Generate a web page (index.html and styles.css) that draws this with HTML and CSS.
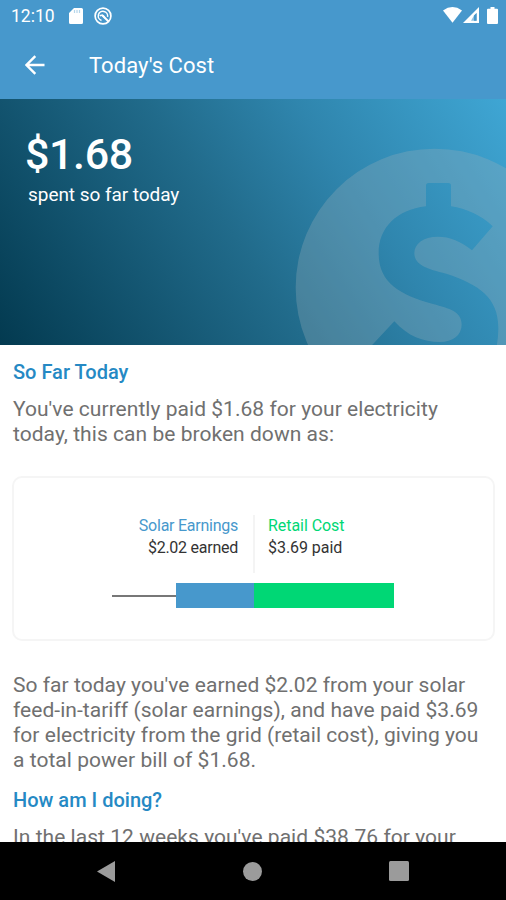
FILE: index.html
```html
<!DOCTYPE html>
<html lang="en">
    <head>
        <meta charset="utf-8">
        <title>Today's Cost</title>
        <link rel="stylesheet" href="styles.css">
    </head>

    <body>

        <div class="statusbar">
            <span class="clock">12:10</span>
            <svg class="sdcard" width="14" height="16" viewBox="0 0 14 16"><path fill="#fff" d="M5 0h7.500a1.500 1.500 0 0 1 1.500 1.500v13a1.500 1.500 0 0 1-1.500 1.500h-11A1.500 1.500 0 0 1 0 14.500V5z"/><path stroke="#4798cc" stroke-opacity=".4" stroke-width="1.200" d="M5.500 2v3M8 2v3M10.500 2v3"/></svg>
            <svg class="sync" width="18" height="18" viewBox="0 0 18 18" fill="none" stroke="#fff"><circle cx="9" cy="9" r="7.900" stroke-width="1.700"/><path stroke-width="1.500" d="M7.500 13.500A4.700 4.700 0 1 1 13.600 9.800M5.800 8.800q3-1.800 5 2.400"/><path stroke-width="2" d="M8 8l6.500 6.500"/></svg>
            <div class="signals">
                <svg width="19" height="16" viewBox="0 0 19 16"><path fill="#fff" d="M0 3.400Q9.500-3.400 19 3.400L9.500 15.700z"/></svg>
                <svg width="16" height="16" viewBox="0 0 16 16"><path fill="#fff" fill-rule="evenodd" d="M16 0v16H0zM13.600 6v7.700H11V8.500z"/><path fill="#4798cc" opacity=".6" d="M11 8.500l2.600-2.500v7.700H8z"/></svg>
                <svg width="11" height="17" viewBox="0 0 11 17"><path fill="#fff" d="M3.500 0h4v1.800H10a1 1 0 0 1 1 1V16a1 1 0 0 1-1 1H1a1 1 0 0 1-1-1V2.800a1 1 0 0 1 1-1h2.500z"/></svg>
            </div>
        </div>

        <div class="toolbar">
            <svg width="20" height="20" viewBox="0 0 20 20" fill="none" stroke="#fff" stroke-width="2.400"><path d="M19.500 10H2M10.300 1.200L1.500 10l8.800 8.800"/></svg>
            <h1>Today's Cost</h1>
        </div>

        <div class="hero">
            <div class="amount">$1.68</div>
            <div class="caption">spent so far today</div>
            <svg class="coin" width="253" height="247" viewBox="0 3 759 741">
                <path fill="#9ab0ba" fill-opacity=".3" fill-rule="evenodd" d="M128 569a417 417 0 1 1 834 0a417 417 0 1 1-834 0z
                    M519 263q0-8 8-8h59q8 0 8 8V325C640 332 685 352 719 385L657 457C625 430 590 416 555 416C510 416 484 438 484 465C484 500 520 513 580 527C680 560 736 600 736 690Q736 720 730 750H349L424 670C465 715 510 732 560 732C600 732 626 710 626 680C626 640 590 632 540 618C440 590 377 555 377 465C377 390 430 335 519 325z"/>
            </svg>
        </div>

        <div class="content">
            <h2>So Far Today</h2>
            <p>You've currently paid $1.68 for your electricity today, this can be broken down as:</p>

            <div class="card">
                <div class="legend">
                    <div class="solar">
                        <div class="name">Solar Earnings</div>
                        <div>$2.02 earned</div>
                    </div>
                    <div class="retail">
                        <div class="name">Retail Cost</div>
                        <div>$3.69 paid</div>
                    </div>
                </div>
                <div class="chart">
                    <div class="line"></div>
                    <div class="bar-solar"></div>
                    <div class="bar-retail"></div>
                </div>
            </div>

            <p>So far today you've earned $2.02 from your solar feed-in-tariff (solar earnings), and have paid $3.69 for electricity from the grid (retail cost), giving you a total power bill of $1.68.</p>

            <h2>How am I doing?</h2>
            <p>In the last 12 weeks you've paid $38.76 for your</p>
        </div>

        <div class="navbar">
            <svg width="18" height="21" viewBox="0 0 18 21"><path fill="#9b9b9b" d="M18 0v21L0 10.500z"/></svg>
            <svg width="19" height="19" viewBox="0 0 19 19"><circle fill="#9b9b9b" cx="9.500" cy="9.500" r="9.500"/></svg>
            <svg width="20" height="20" viewBox="0 0 20 20"><rect fill="#9b9b9b" width="20" height="20" rx="1.500"/></svg>
        </div>

    </body>
</html>
```

FILE: styles.css
```css
body {
    margin: 0;
    height: 900px;
    overflow: hidden;
    display: flex;
    flex-direction: column;
    background-color: #fff;
    font-family: Roboto, "Liberation Sans", sans-serif;
}

h1, h2, p {
    margin: 0;
}

svg {
    display: block;
    flex: none;
}

.statusbar {
    height: 32px;
    flex: none;
    display: flex;
    align-items: center;
    padding: 0 8px 0 11px;
    background-color: #4798cc;
    color: #fff;
}

.clock {
    width: 58px;
    font-size: 17.500px;
}

.sync {
    margin-left: 11px;
    margin-top: -1px;
}

.signals {
    display: flex;
    gap: 1px;
    margin-left: auto;
    margin-top: -2px;
}

.signals svg:last-child {
    margin-left: 7px;
}

.toolbar {
    height: 67px;
    flex: none;
    display: flex;
    align-items: center;
    gap: 44px;
    padding: 0 0 2px 25px;
    box-sizing: border-box;
    background-color: #4798cc;
    color: #fff;
}

.toolbar h1 {
    padding-top: 2px;
    font-size: 22px;
    font-weight: 400;
    letter-spacing: 0.05px;
}

.hero {
    position: relative;
    height: 246px;
    flex: none;
    overflow: hidden;
    padding: 29px 25px 0;
    box-sizing: border-box;
    background: linear-gradient(57deg, #033a50 0%, #216b8b 46%, #2f85ad 68%, #3fa6d4 100%);
    color: #fff;
}

.amount {
    font-size: 43px;
    font-weight: 500;
    line-height: 52px;
    letter-spacing: -0.4px;
}

.caption {
    padding: 3px;
    font-size: 19px;
    line-height: 24px;
    letter-spacing: -0.05px;
}

.coin {
    position: absolute;
    right: 0;
    top: 0;
}

.content {
    flex: 1;
    min-height: 0;
    overflow: hidden;
    padding: 15px 11px 0 12px;
}

.content h2 {
    padding-left: 1px;
    font-size: 20px;
    font-weight: 500;
    line-height: 25px;
    color: #2589c4;
}

.content p {
    margin-top: 12px;
    padding: 0 10px 0 1px;
    font-size: 21px;
    line-height: 25px;
    letter-spacing: 0.04px;
    color: #707070;
}

.card {
    height: 165px;
    margin: 29px 0 32px;
    padding-top: 37px;
    box-sizing: border-box;
    border: 2px solid #f5f5f5;
    border-radius: 10px;
}

.card + p {
    margin-bottom: 15px;
}

.legend {
    display: grid;
    grid-template-columns: 241px 1fr;
    height: 58px;
    font-size: 16px;
    line-height: 22px;
    color: #333;
}

.solar {
    padding-right: 15px;
    border-right: 2px solid #f4f4f4;
    letter-spacing: -0.25px;
    text-align: right;
}

.retail {
    padding-left: 13px;
    letter-spacing: -0.05px;
}

.solar .name {
    color: #4798cc;
}

.retail .name {
    color: #00d775;
}

.chart {
    display: flex;
    align-items: center;
    margin: 10px 0 0 98px;
}

.line {
    width: 64px;
    height: 2px;
    background-color: #777;
}

.bar-solar {
    width: 78px;
    height: 25px;
    background-color: #4798cc;
}

.bar-retail {
    width: 140px;
    height: 25px;
    background-color: #00d775;
}

.navbar {
    height: 58px;
    flex: none;
    display: flex;
    align-items: center;
    justify-content: space-between;
    padding: 0 97px;
    background-color: #000;
}
```
